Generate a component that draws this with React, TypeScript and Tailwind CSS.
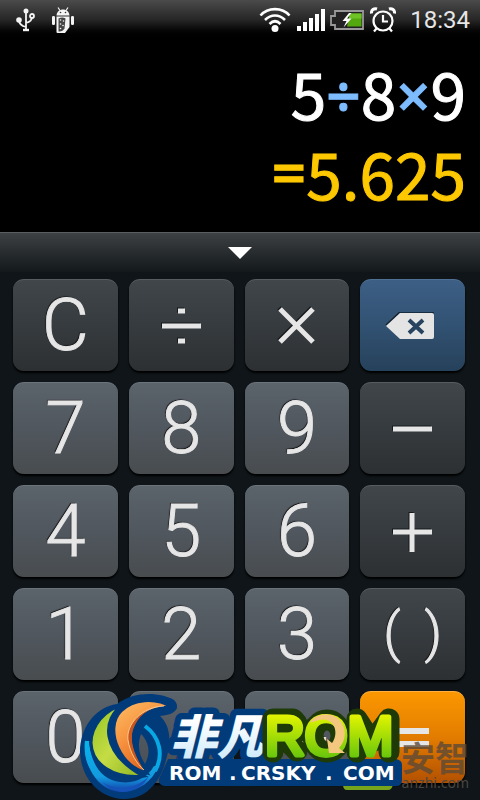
import React, { useState } from 'react'
import clsx from 'clsx'

type Kind = 'digit' | 'operator' | 'delete' | 'equals'

interface Key {
  label: string
  name: string
  kind: Kind
}

const keys: Key[] = [
  { label: 'C', name: 'Clear', kind: 'operator' },
  { label: '÷', name: 'Divide', kind: 'operator' },
  { label: '×', name: 'Multiply', kind: 'operator' },
  { label: '', name: 'Delete', kind: 'delete' },
  { label: '7', name: '7', kind: 'digit' },
  { label: '8', name: '8', kind: 'digit' },
  { label: '9', name: '9', kind: 'digit' },
  { label: '−', name: 'Subtract', kind: 'operator' },
  { label: '4', name: '4', kind: 'digit' },
  { label: '5', name: '5', kind: 'digit' },
  { label: '6', name: '6', kind: 'digit' },
  { label: '+', name: 'Add', kind: 'operator' },
  { label: '1', name: '1', kind: 'digit' },
  { label: '2', name: '2', kind: 'digit' },
  { label: '3', name: '3', kind: 'digit' },
  { label: '()', name: 'Brackets', kind: 'operator' },
  { label: '0', name: '0', kind: 'digit' },
  { label: '.', name: 'Decimal point', kind: 'digit' },
  { label: '+/-', name: 'Change sign', kind: 'digit' },
  { label: '=', name: 'Equals', kind: 'equals' },
]

const keyColors: Record<Kind, string> = {
  digit: 'from-[#5b636b] via-[#50575e] to-[#484c4f] border-t-[#6c747b]',
  operator: 'from-[#40464a] via-[#363b3f] to-[#2d3032] border-t-[#565c60]',
  delete: 'from-[#3d5f85] via-[#325273] to-[#26415a] border-t-[#4f7095]',
  equals: 'from-[#fb9800] via-[#e27c00] to-[#b35000] border-t-[#ffb13d]',
}

const signPaths: Record<string, string> = {
  '÷': 'M2 22H41M18 7h7M18 37h7',
  '×': 'M5 5L38 38M38 5L5 38',
  '−': 'M2 22H41',
  '+': 'M2 22H41M21 3V42',
}

const UsbIcon = () => (
  <svg width="20" height="24" viewBox="0 0 20 24" fill="none" stroke="#f4f4f4" strokeWidth="1.8">
    <path d="M10 4v17M10 19C6 18 3 16 3 12M10 15c4-1 6-3 6-6" />
    <circle cx="10" cy="3" r="2.500" fill="#f4f4f4" stroke="none" />
    <circle cx="3" cy="12" r="2.800" fill="#f4f4f4" stroke="none" />
    <circle cx="16" cy="8" r="2" />
    <path d="M7 22h6" strokeWidth="2.400" />
  </svg>
)

const RobotIcon = () => (
  <svg width="22" height="27" viewBox="0 0 22 27" fill="#f4f4f4">
    <path d="M6 0.500l2 3M16 0.500l-2 3" stroke="#f4f4f4" strokeWidth="1.200" />
    <path d="M4.500 8.500C5 0.500 17 0.500 17.500 8.500z" />
    <path d="M4.500 9.500h13V20l-4.500 6H5.500q-1 0-1-1z" />
    <rect x="0" y="9" width="3" height="9" rx="1.300" />
    <rect x="19" y="9" width="3" height="9" rx="1.300" />
    <path d="M6.500 11.500q4-2 7 0l-1 10q-2 3.500-6 3z" fill="#444" />
    <g>
      <circle cx="8.500" cy="13" r=".8" />
      <circle cx="11.500" cy="14" r=".8" />
      <circle cx="8.500" cy="17" r=".8" />
      <circle cx="11" cy="18.500" r=".8" />
      <circle cx="8.500" cy="21.500" r=".8" />
    </g>
    <g fill="#333">
      <circle cx="8.500" cy="5.500" r=".8" />
      <circle cx="13.500" cy="5.500" r=".8" />
    </g>
  </svg>
)

const WifiIcon = () => (
  <svg width="32" height="26" viewBox="0 0 32 26" fill="none" stroke="#fff" strokeWidth="2.600">
    <path d="M1.500 8.500C9 0 23 0 30.500 8.500M6 13c6-6 14-6 20 0M10.500 17c3.500-3.500 7.500-3.500 11 0" />
    <circle cx="16" cy="21.500" r="3.500" fill="#fff" stroke="none" />
  </svg>
)

const SignalIcon = () => (
  <svg width="29" height="22" viewBox="0 0 29 22" fill="#fff">
    <rect x="0" y="17" width="4" height="5" />
    <rect x="6" y="13" width="4" height="9" />
    <rect x="12" y="9" width="4" height="13" />
    <rect x="18" y="5" width="4" height="17" />
    <rect x="24" y="0" width="4" height="22" />
  </svg>
)

const BatteryIcon = () => (
  <svg width="34" height="20" viewBox="0 0 34 20">
    <path d="M5 1h28v18H5v-4H1V6h4z" fill="#222" stroke="#999" strokeWidth="1.800" />
    <path d="M20 3.500h11.500v13H17z" fill="#52a80d" />
    <path d="M20 3.500h11.500v5H19z" fill="#6fc225" />
    <path d="M19 3l-6.500 8h4l-3 6.500 8-9h-4.500l4.500-5.500z" fill="#fff" />
  </svg>
)

const AlarmIcon = () => (
  <svg width="26" height="26" viewBox="0 0 26 26" fill="none" stroke="#fff" strokeWidth="2.200">
    <circle cx="13" cy="14" r="9.500" />
    <path d="M13 8v6.500h5M6.500 21.500L4 24.500M19.500 21.500l2.500 3" />
    <path d="M1.500 6.500C1 3 4 1 7 2M24.500 6.500C25 3 22 1 19 2" strokeWidth="3" />
  </svg>
)

const DeleteIcon = () => (
  <svg width="56" height="28" viewBox="0 0 56 28">
    <path d="M1 13L15 0h33v26" fill="none" stroke="#10202f" strokeWidth="1.500" />
    <path d="M1 14L15 1h32q2 0 2 2v22q0 2-2 2H15z" fill="#e4e4e4" />
    <path d="M24 8l14 13M38 8L24 21" stroke="#27435f" strokeWidth="4" />
  </svg>
)

const SignIcon = ({ d }: { d: string }) => (
  <svg width="43" height="43" viewBox="0 0 43 43" fill="none" strokeWidth="5">
    <path d={d} stroke="#15181a" transform="translate(-1 -1)" />
    <path d={d} stroke="#e6e6e6" />
  </svg>
)

const StatusBar = () => (
  <header className="flex h-10 items-center justify-between bg-linear-to-b from-[#4b4b4b] via-[#252625] to-black pr-[10px] pl-4">
    <div className="flex items-center gap-4">
      <UsbIcon />
      <RobotIcon />
    </div>
    <div className="flex items-center">
      <WifiIcon />
      <div className="ml-[6px] flex items-center gap-1">
        <SignalIcon />
        <BatteryIcon />
      </div>
      <div className="ml-[6px] flex items-center gap-[14px]">
        <AlarmIcon />
        <time className="font-['Roboto',sans-serif] text-[24px] leading-6 text-[#e6e6e6]">18:34</time>
      </div>
    </div>
  </header>
)

const Sign = ({ children }: { children: string }) => (
  <span className="font-['Open_Sans',sans-serif] text-[60px] font-semibold">{children}</span>
)

const Display = () => (
  <output className="block bg-black pt-3 pr-[14px] pb-5 font-['Noto_Sans_CJK_SC',sans-serif] text-[64px] leading-[80px] [-webkit-text-stroke:1px]">
    <div className="flex h-20 items-center justify-end text-white">
      <span>5</span>
      <span className="text-[#7dbcff]"><Sign>÷</Sign></span>
      <span>8</span>
      <span className="text-[#7dbcff]"><Sign>×</Sign></span>
      <span>9</span>
    </div>
    <div className="flex h-20 items-center justify-end text-[#fdc800]">
      <Sign>=</Sign>
      <span>5.625</span>
    </div>
  </output>
)

const KeyFace = ({ item }: { item: Key }) => {
  if (item.kind === 'delete') return <DeleteIcon />
  if (item.label === '=') {
    return (
      <svg width="36" height="20" viewBox="0 0 36 20">
        <path d="M1 3h33M1 16h33" stroke="#e6e6e6" strokeWidth="6" />
      </svg>
    )
  }
  if (signPaths[item.label]) return <SignIcon d={signPaths[item.label]} />
  if (item.label === '()') {
    return (
      <>
        <span>(</span>
        <span>)</span>
      </>
    )
  }
  return <span>{item.label}</span>
}

const KeyButton = ({ item }: { item: Key }) => (
  <button
    type="button"
    aria-label={item.name}
    className={clsx(
      "flex h-[92px] items-center justify-center rounded-[11px] border-t bg-linear-to-b font-['Roboto',sans-serif] font-light text-[#e6e6e6] shadow-[0_2px_2px_#000] [-webkit-text-stroke:1px_#e6e6e6] text-shadow-[-1px_-1px_1px_#0a0a0a]",
      keyColors[item.kind],
      item.label === '+/-' && 'text-[48px]',
      item.label === '()' && 'gap-6 pb-1 text-[54px]',
      item.label !== '+/-' && item.label !== '()' && 'text-[72px]'
    )}
  >
    <KeyFace item={item} />
  </button>
)

const RomLogo = () => (
  <svg
    className="pointer-events-none absolute bottom-0 left-20"
    width="324"
    height="110"
    viewBox="80 690 324 110"
    role="img"
    aria-label="ROM.CRSKY.COM"
  >
    <defs>
      <linearGradient id="lime" x1="0" y1="0" x2="1" y2="1">
        <stop offset="0" stopColor="#8fc31f" />
        <stop offset=".5" stopColor="#c5dc45" />
        <stop offset="1" stopColor="#8db520" />
      </linearGradient>
      <linearGradient id="orange" x1="0" y1="0" x2=".6" y2="1">
        <stop offset="0" stopColor="#ffc067" />
        <stop offset=".5" stopColor="#f6913e" />
        <stop offset="1" stopColor="#dc5b17" />
      </linearGradient>
      <linearGradient id="ring" x1="0" y1="0" x2="0" y2="1">
        <stop offset="0" stopColor="#08b4ea" />
        <stop offset=".7" stopColor="#139be0" />
        <stop offset="1" stopColor="#1440a8" />
      </linearGradient>
      <linearGradient id="letters" x1="0" y1="0" x2="0" y2="1">
        <stop offset=".15" stopColor="#e4f500" />
        <stop offset=".85" stopColor="#67c60c" />
      </linearGradient>
      <linearGradient id="ice" x1="0" y1="0" x2="0" y2="1">
        <stop offset=".3" stopColor="#fff" />
        <stop offset="1" stopColor="#c5e6fa" />
      </linearGradient>
    </defs>

    {/* green mascot peeking out below the lettering */}
    <path d="M343 784h50q-1 6-5 6h-41q-4 0-4-6z" fill="#76a51b" />

    {/* globe of three crescents */}
    <path
      fillRule="evenodd"
      fill="#023b7a"
      d="M80 752C80 728 95 707 117 704C134 691 160 692 174 700C181 707 176 715 160 716C170 725 172 741 166 760C160 784 144 800 123 799C99 798 81 778 80 752z M141 734C137 745 139 755 145 764C151 753 149 742 141 734z"
    />
    <path d="M145 726C160 737 164 755 155 771M87 741C86 750 87 760 92 768" fill="none" stroke="#08a8e4" strokeWidth="4" />
    <path d="M85 741C83 766 98 792 123 792C140 791 152 781 158 767L154 766C147 778 135 784 120 782C103 780 91 766 89 741z" fill="url(#ring)" />
    <path d="M102 782C116 791 137 789 149 776C143 787 133 792 122 792C113 791 108 787 102 782z" fill="#1553b8" />
    <g stroke="#023b7a" strokeWidth="3">
      <path d="M123 705C105 709 91 726 91 743C92 766 113 781 143 776C123 768 107 752 105 735C104 725 113 714 125 706z" fill="url(#lime)" />
      <path d="M123 705C102 718 100 752 143 776C113 779 92 764 91 743C91 726 105 709 123 705z" fill="url(#lime)" />
      <path d="M172 707C155 697 133 699 121 711C112 720 112 735 118 748C123 759 132 769 147 773C133 753 130 737 136 725C142 713 153 707 172 707z" fill="url(#orange)" />
    </g>
    <path d="M164 706C142 707 126 724 128 740C130 753 137 764 144 770C131 750 129 736 135 725C141 713 151 707 164 706z" fill="#c9551b" />
    <path d="M164 706C142 707 126 724 128 740C130 753 137 764 144 770" fill="none" stroke="#ffe0a8" strokeWidth=".8" />

    {/* web address plate */}
    <path d="M168 759h228q6 1 6 6v15q0 6-6 6H164q-6-1-5-7z" fill="#023b7a" />

    <text
      x="170"
      y="754"
      fontFamily="'Noto Sans CJK SC', sans-serif"
      fontSize="47"
      fontWeight="900"
      fontStyle="italic"
      fill="url(#ice)"
      stroke="#023b7a"
      strokeWidth="13"
      strokeLinejoin="round"
      paintOrder="stroke"
    >
      非凡
    </text>

    {/* dark green backing for the lettering */}
    <g fill="none" stroke="#1d3a07" strokeWidth="21" strokeLinejoin="round" strokeLinecap="round">
      <path d="M273 719V752M273 719h20q8 6 2 15h-15l17 17" />
      <path d="M357 752V719L372 742L389 719V752" />
      <ellipse cx="327" cy="736" rx="14" ry="16" />
    </g>
    <text
      x="265"
      y="755"
      fontFamily="'Liberation Sans', sans-serif"
      fontSize="55"
      fill="url(#letters)"
      stroke="url(#letters)"
      strokeWidth="5"
      strokeLinejoin="round"
    >
      ROM
    </text>
    <path d="M310 722C317 712 335 711 342 723C347 732 345 742 339 748L345 753L329 753L327 739L332 743C338 735 336 722 326 720C320 718 314 723 310 722z" fill="#f3c77d" />

    <g fontFamily="'DejaVu Sans', sans-serif" fontSize="20" fontWeight="700" fill="#fff">
      <text x="169" y="780">ROM</text>
      <text x="229" y="780">.</text>
      <text x="241" y="780">CRSKY</text>
      <text x="325" y="780">.</text>
      <text x="343" y="780">COM</text>
    </g>
  </svg>
)

export default function App() {
  const [open, setOpen] = useState(false)

  return (
    <main className="relative min-h-screen overflow-hidden bg-[#0f1518]">
      <StatusBar />
      <Display />
      <button
        type="button"
        aria-label="History"
        aria-expanded={open}
        onClick={() => setOpen(!open)}
        className="flex h-10 w-full items-center justify-center border-t border-[#5a5e60] bg-linear-to-b from-[#3d4144] to-[#14191c]"
      >
        <svg width="24" height="12" viewBox="0 0 24 12">
          <path d="M0 0h24L12 12z" fill="#fff" />
        </svg>
      </button>
      <div className="grid grid-cols-4 gap-[11px] pt-[7px] pr-[15px] pb-[17px] pl-[13px]">
        {keys.map((item) => (
          <KeyButton key={item.name} item={item} />
        ))}
      </div>
      <RomLogo />
      <div className="pointer-events-none absolute right-[11px] bottom-[9px] text-right text-[#5d4a36]">
        <p className="font-['Noto_Sans_CJK_SC',sans-serif] text-[34px] leading-[36px] font-bold opacity-80">安智</p>
        <p className="font-['Noto_Sans',sans-serif] text-[14px] leading-4 text-[#4b4640]">anzhi.com</p>
      </div>
    </main>
  )
}
